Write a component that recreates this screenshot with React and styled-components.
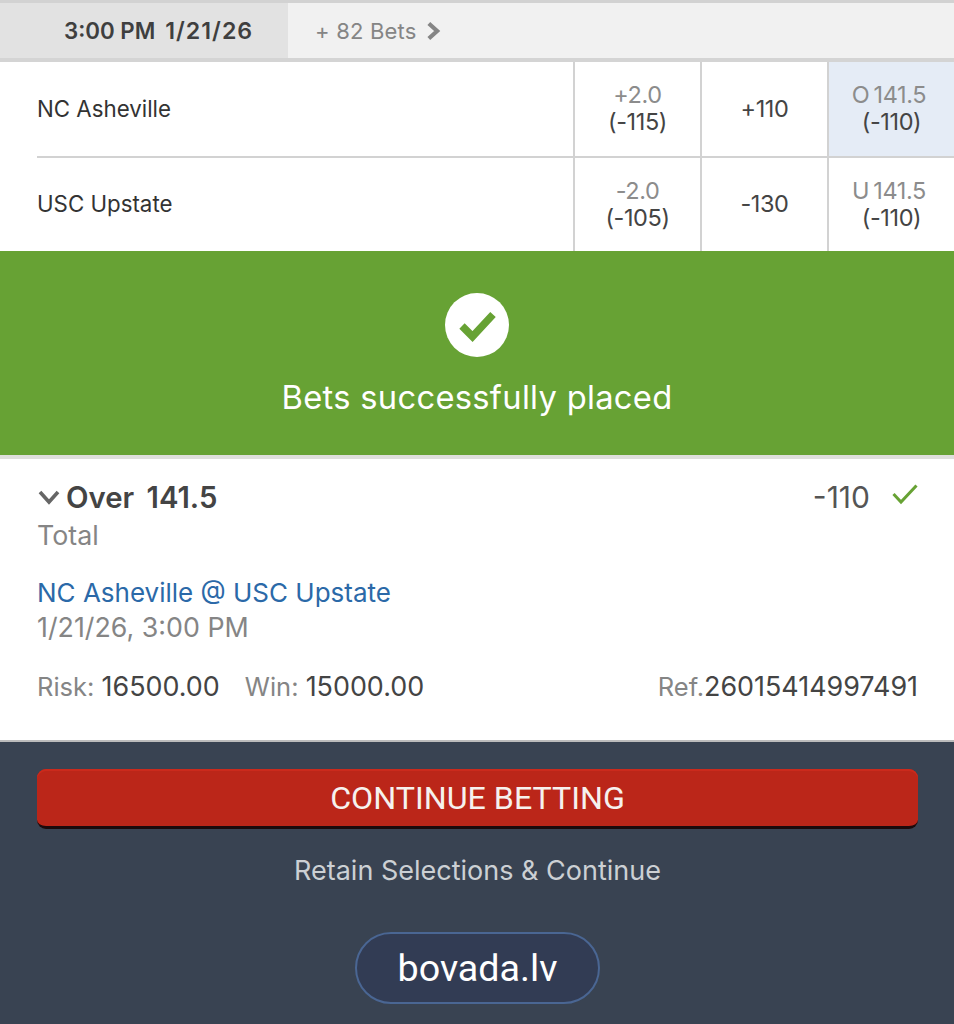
import React from 'react';
import styled, { createGlobalStyle } from 'styled-components';

const GlobalStyle = createGlobalStyle`
  html, body {
    margin: 0;
    padding: 0;
    background: #394352;
  }
  body {
    font-family: Inter, "Noto Sans", "Liberation Sans", sans-serif;
    overflow: hidden;
  }
`;

const Page = styled.div`
  width: 954px;
  height: 1024px;
  display: flex;
  flex-direction: column;
  background: #fff;
  overflow: hidden;
`;

const GameHeader = styled.div`
  height: 55px;
  display: flex;
  border-top: 3px solid #d2d2d2;
  border-bottom: 4px solid #d4d4d4;
  background: #f1f1f1;
`;

const GameTime = styled.div`
  width: 288px;
  box-sizing: border-box;
  padding-left: 64px;
  display: flex;
  align-items: center;
  gap: 10px;
  background: #e2e2e2;
  color: #3f3f3f;
  font-size: 22.3px;
  font-weight: 600;
`;

const GameDate = styled.span`
  font-size: 23.2px;
  letter-spacing: 1px;
`;

const MoreBets = styled.div`
  display: flex;
  align-items: center;
  padding-left: 27px;
  gap: 6px;
  color: #858585;
  font-size: 22px;
  letter-spacing: 0.2px;
`;

const Row = styled.div`
  height: ${props => props.height}px;
  display: grid;
  grid-template-columns: 573px 127px 127px 127px;
`;

const TeamName = styled.div`
  margin-left: 37px;
  display: flex;
  align-items: center;
  color: #333;
  font-size: 22.3px;
  padding-bottom: 2px;
  border-bottom: ${props => (props.divided ? '2px solid #d2d2d2' : 'none')};
`;

const OddsCell = styled.div`
  border-left: 2px solid #d2d2d2;
  border-bottom: ${props => (props.divided ? '2px solid #d2d2d2' : 'none')};
  padding-bottom: 2px;
  background: ${props => (props.selected ? '#e5ecf6' : '#fff')};
  display: flex;
  flex-direction: column;
  align-items: center;
  justify-content: center;
  font-size: 23.5px;
  line-height: 27px;
  color: #444;
  letter-spacing: -0.4px;
`;

const Line = styled.span`
  color: #8c8c8c;
  word-spacing: -2px;
  margin-right: ${props => (props.offset ? '5px' : '0')};
`;

const Banner = styled.div`
  height: 204px;
  display: flex;
  flex-direction: column;
  align-items: center;
  background: #67a234;
  color: #fff;
  padding-top: 42px;
  box-sizing: border-box;
`;

const BannerText = styled.div`
  margin-top: 19px;
  font-size: 32.7px;
  line-height: 42px;
  letter-spacing: 0.3px;
`;

const BetPanel = styled.div`
  height: 285px;
  box-sizing: border-box;
  border-top: 4px solid #dfdfdc;
  padding: 20px 36px 0 37px;
`;

const TitleRow = styled.div`
  display: flex;
  align-items: center;
  justify-content: space-between;
  height: 36px;
  margin-bottom: 3px;
`;

const Title = styled.div`
  display: flex;
  align-items: center;
  gap: 5px;
  color: #444;
  font-size: 29.3px;
  font-weight: 600;
  word-spacing: 5px;
`;

const Price = styled.div`
  display: flex;
  align-items: center;
  gap: 22px;
  color: #555;
  font-size: 30px;
`;

const Muted = styled.div`
  color: #858585;
  font-size: 26.8px;
  line-height: 35px;
`;

const EventLink = styled.div`
  margin-top: 23px;
  color: #2b69a8;
  font-size: 26px;
  line-height: 34px;
`;

const AmountRow = styled.div`
  margin-top: 24px;
  display: flex;
  justify-content: space-between;
  font-size: 26.9px;
  line-height: 34px;
`;

const Amounts = styled.div`
  display: flex;
  gap: 25px;
`;

const Label = styled.span`
  color: #858585;
  font-size: 25.5px;
`;

const Value = styled.span`
  color: #444;
`;

const Footer = styled.div`
  flex: 1;
  display: flex;
  flex-direction: column;
  align-items: center;
  background: #394352;
  border-top: 2px solid #bcbcbc;
  padding: 27px 36px 0 37px;
`;

const ContinueButton = styled.button`
  width: 100%;
  height: 60px;
  border: 0;
  border-bottom: 3px solid #1c0a0c;
  border-radius: 9px;
  background: #bb2619;
  box-shadow: inset 0 2px 0 #cb2a1c;
  color: #f6f1ee;
  font-family: Roboto, sans-serif;
  font-size: 32.2px;
`;

const RetainLink = styled.div`
  margin-top: 25px;
  color: #ccd0d4;
  font-size: 27px;
  line-height: 34px;
`;

const DomainPill = styled.div`
  margin-top: 44px;
  width: 245px;
  height: 72px;
  box-sizing: border-box;
  display: flex;
  align-items: center;
  justify-content: center;
  border: 2px solid #4a6693;
  border-radius: 36px;
  background: #323c54;
  color: #fff;
  font-family: Roboto, sans-serif;
  font-size: 37.7px;
`;

const SmallCheckIcon = styled.svg`
  margin-bottom: 6px;
`;

const CheckBadge = () => (
  <svg width="64" height="64" viewBox="0 0 64 64">
    <circle cx="32" cy="32" r="32" fill="#fff" />
    <path d="M17 33 L27.5 43.5 L48 21.5" fill="none" stroke="#67a234" strokeWidth="7.5" />
  </svg>
);

const Chevron = ({ size, color, direction, weight }) => (
  <svg width={size} height={size} viewBox="0 0 24 24">
    <path
      d={direction === 'down' ? 'M3 7 L12 17 L21 7' : 'M7 3 L17 12 L7 21'}
      fill="none"
      stroke={color}
      strokeWidth={weight}
    />
  </svg>
);

const SmallCheck = () => (
  <SmallCheckIcon width="26" height="22" viewBox="0 0 26 22">
    <path d="M1.5 11 L9 19 L24.5 2.5" fill="none" stroke="#67a234" strokeWidth="3" />
  </SmallCheckIcon>
);

const games = [
  { team: 'NC Asheville', line: '+2.0', lineOdds: '(-115)', money: '+110', total: 'O 141.5', totalOdds: '(-110)', height: 96, divided: true, selected: true },
  { team: 'USC Upstate', line: '-2.0', lineOdds: '(-105)', money: '-130', total: 'U 141.5', totalOdds: '(-110)', height: 93 }
];

export default function App() {
  return (
    <Page>
      <GlobalStyle />
      <GameHeader>
        <GameTime>
          <span>3:00 PM</span>
          <GameDate>1/21/26</GameDate>
        </GameTime>
        <MoreBets>
          + 82 Bets
          <Chevron size={20} color="#858585" direction="right" weight={5} />
        </MoreBets>
      </GameHeader>

      {games.map(game => (
        <Row key={game.team} height={game.height}>
          <TeamName divided={game.divided}>{game.team}</TeamName>
          <OddsCell divided={game.divided}>
            <Line>{game.line}</Line>
            <span>{game.lineOdds}</span>
          </OddsCell>
          <OddsCell divided={game.divided}>{game.money}</OddsCell>
          <OddsCell divided={game.divided} selected={game.selected}>
            <Line offset>{game.total}</Line>
            <span>{game.totalOdds}</span>
          </OddsCell>
        </Row>
      ))}

      <Banner>
        <CheckBadge />
        <BannerText>Bets successfully placed</BannerText>
      </Banner>

      <BetPanel>
        <TitleRow>
          <Title>
            <Chevron size={24} color="#666" direction="down" weight={3.6} />
            Over 141.5
          </Title>
          <Price>
            -110
            <SmallCheck />
          </Price>
        </TitleRow>
        <Muted>Total</Muted>
        <EventLink>NC Asheville @ USC Upstate</EventLink>
        <Muted>1/21/26, 3:00 PM</Muted>
        <AmountRow>
          <Amounts>
            <span>
              <Label>Risk: </Label>
              <Value>16500.00</Value>
            </span>
            <span>
              <Label>Win: </Label>
              <Value>15000.00</Value>
            </span>
          </Amounts>
          <span>
            <Label>Ref.</Label>
            <Value>26015414997491</Value>
          </span>
        </AmountRow>
      </BetPanel>

      <Footer>
        <ContinueButton>CONTINUE BETTING</ContinueButton>
        <RetainLink>Retain Selections &amp; Continue</RetainLink>
        <DomainPill>bovada.lv</DomainPill>
      </Footer>
    </Page>
  );
}
